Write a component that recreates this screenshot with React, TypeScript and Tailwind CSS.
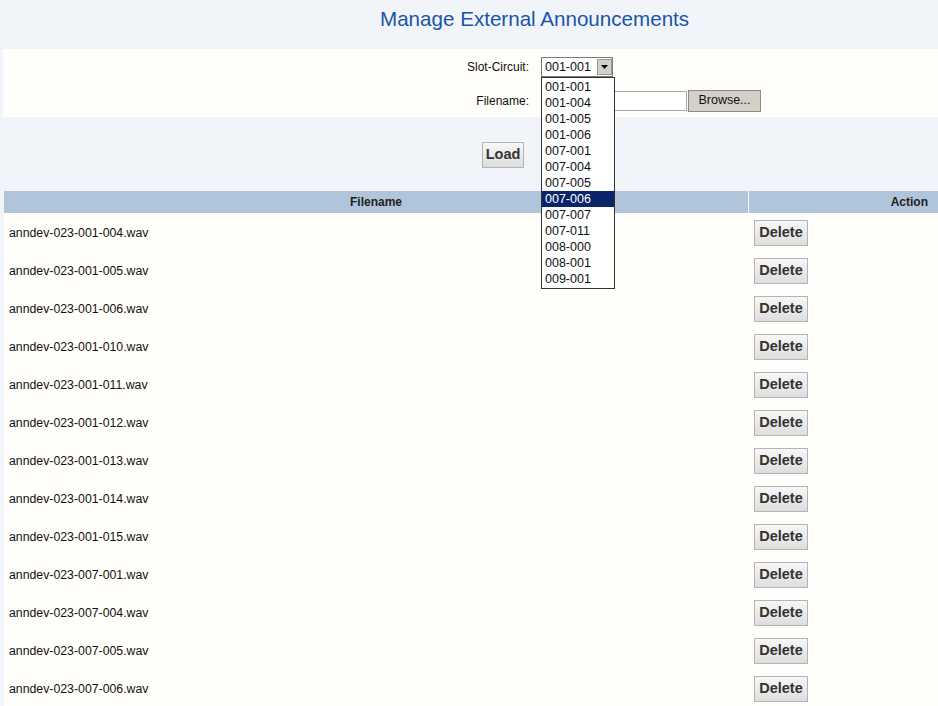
const slots = [
  "001-001",
  "001-004",
  "001-005",
  "001-006",
  "007-001",
  "007-004",
  "007-005",
  "007-006",
  "007-007",
  "007-011",
  "008-000",
  "008-001",
  "009-001",
];

const files = [
  "anndev-023-001-004.wav",
  "anndev-023-001-005.wav",
  "anndev-023-001-006.wav",
  "anndev-023-001-010.wav",
  "anndev-023-001-011.wav",
  "anndev-023-001-012.wav",
  "anndev-023-001-013.wav",
  "anndev-023-001-014.wav",
  "anndev-023-001-015.wav",
  "anndev-023-007-001.wav",
  "anndev-023-007-004.wav",
  "anndev-023-007-005.wav",
  "anndev-023-007-006.wav",
];

function GrayButton({ label, className }: { label: string; className: string }) {
  return (
    <button
      className={
        "flex items-center justify-center border border-[#b4b4b4] bg-gradient-to-b from-[#f7f7f7] to-[#dedede] text-[14.5px] font-bold text-[#333] " +
        className
      }
    >
      {label}
    </button>
  );
}

export default function App() {
  return (
    <div
      className="relative h-[706px] w-[938px] overflow-hidden bg-[#f1f4f8] text-[12.3px] text-[#111]"
      style={{ fontFamily: '"Liberation Sans", Arial, sans-serif' }}
    >
      <div className="flex h-[49px] items-center pl-[380px] pb-[10px]">
        <h1 className="text-[20.6px] text-[#1a55a6]">Manage External Announcements</h1>
      </div>

      <div className="ml-[3px] h-[68px] bg-[#fffefa] pt-[8px] text-[12px]">
        <div className="flex h-[20px] items-center">
          <span className="w-[526px] text-right">Slot-Circuit:</span>
          <div className="ml-[12px] flex h-[20px] w-[72px] items-center border border-[#7a7a7a] bg-white">
            <span className="flex-1 pl-[3px] text-[12.5px]">001-001</span>
            <span className="flex h-[16px] w-[15px] items-center justify-center border border-[#9a9a9a] bg-[#d4d0c8]">
              <svg width="7" height="4" viewBox="0 0 7 4">
                <path d="M0 0h7L3.5 4z" fill="#000" />
              </svg>
            </span>
          </div>
        </div>
        <div className="mt-[13px] flex h-[21px] items-center">
          <span className="w-[526px] text-right">Filename:</span>
          <div className="ml-[12px] h-[20px] w-[146px] border border-[#a5a5a5] bg-white" />
          <button className="ml-[1px] h-[22px] w-[73px] border border-[#8a8a8a] bg-[#d4d0c8] text-[12.5px]">
            Browse...
          </button>
        </div>
      </div>

      <div className="flex h-[74px] items-center pl-[482px] pt-[1px]">
        <GrayButton label="Load" className="h-[26px] w-[42px]" />
      </div>

      <div className="ml-[4px]">
        <div className="flex h-[22px] items-center bg-[#b0c5da] text-[12px] font-bold text-[#222]">
          <div className="w-[744px] text-center">Filename</div>
          <div className="h-full w-[1px] bg-[#f4f7fa]" />
          <div className="flex-1 pr-[10px] text-right">Action</div>
        </div>
        {files.map((f) => (
          <div key={f} className="flex h-[38px] items-center bg-[#fffefa] pt-[2px]">
            <div className="w-[745px] pl-[5px]">{f}</div>
            <GrayButton label="Delete" className="ml-[5px] h-[26px] w-[54px]" />
          </div>
        ))}
      </div>

      <ul className="absolute left-[541px] top-[77px] w-[74px] border border-[#333] bg-white py-[1px] text-[12.5px]">
        {slots.map((s) => (
          <li
            key={s}
            className={
              "flex h-[16px] items-center pl-[3px] " +
              (s === "007-006" ? "bg-[#0a246a] text-white" : "")
            }
          >
            {s}
          </li>
        ))}
      </ul>
    </div>
  );
}
